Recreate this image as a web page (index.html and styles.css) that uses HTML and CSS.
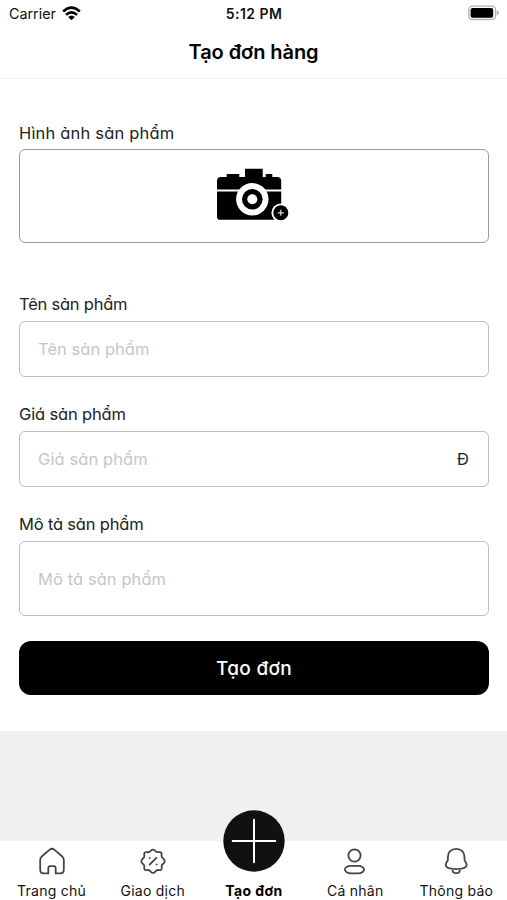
FILE: index.html
```html
<!DOCTYPE html>
<html lang="vi">
<head>
<meta charset="utf-8">
<title>Tạo đơn hàng</title>
<link rel="stylesheet" href="styles.css">
</head>
<body>
<div class="screen">
  <header class="top">
    <div class="status">
      <div class="carrier"><span class="carrier-name">Carrier</span>
        <svg class="wifi" width="19" height="15" viewBox="0 0 19 15"><g fill="none" stroke="#000" stroke-width="2.6"><path d="M1.2 5.5Q9.5-2.3 17.8 5.5"/><path d="M4 8.9Q9.5 3.8 15 8.9"/></g><path d="M6.2 11Q9.5 7.8 12.8 11L9.5 14.3Z"/></svg>
      </div>
      <span class="time">5:12 PM</span>
      <svg class="battery" width="31" height="16" viewBox="0 0 31 16"><rect x=".8" y="1.1" width="26.8" height="13.4" rx="3.8" fill="#fff" stroke="#b4b4b4" stroke-width="1.4"/><rect x="2.6" y="3" width="22.6" height="9.7" rx="2"/><path d="M28.8 5.2Q31 6 31 7.8T28.8 10.4Z" fill="#b4b4b4"/></svg>
    </div>
    <h1 class="title"><span>Tạo đơn hàng</span></h1>
  </header>

  <main class="form">
    <section class="field field-photo">
      <label class="label l-photo">Hình ảnh sản phẩm</label>
      <div class="box photo">
        <svg width="74" height="54" viewBox="216 168 74 54"><path d="M217 189.4V181Q217 177 221 177H226.7V174H239.3V177H245V168.7H262.7V177H265.7V174H272.3V177H277.2Q281.2 177 281.2 181V189.4ZM217 191.5H281.2V216.7Q281.2 219.8 278 219.8H220.2Q217 219.8 217 216.7Z"/><circle cx="252.3" cy="199.3" r="16.2" fill="#fff"/><circle cx="252.3" cy="199.3" r="10.3"/><circle cx="252.3" cy="199.3" r="5" fill="#fff"/><circle cx="280.8" cy="212.8" r="9.4" fill="#fff"/><circle cx="280.8" cy="212.8" r="7.5"/><path d="M277.8 212.8h6M280.8 209.8v6" stroke="#ddd" stroke-width="1.2"/></svg>
      </div>
    </section>
    <section class="field">
      <label class="label l-name">Tên sản phẩm</label>
      <div class="box"><span class="hint h-name">Tên sản phẩm</span></div>
    </section>
    <section class="field">
      <label class="label l-price">Giá sản phẩm</label>
      <div class="box"><span class="hint h-price">Giá sản phẩm</span><span class="unit">Đ</span></div>
    </section>
    <section class="field">
      <label class="label l-desc">Mô tả sản phẩm</label>
      <div class="box tall"><span class="hint h-desc">Mô tả sản phẩm</span></div>
    </section>
    <button class="submit"><span>Tạo đơn</span></button>
  </main>

  <nav class="tabs">
    <a class="tab"><svg width="30" height="30" viewBox="0 0 30 30"><path d="M11.3 27.4H6.8Q3.2 27.4 3.2 23.8V13.8Q3.2 11.6 5 10.2L12.7 3.6Q15 1.8 17.3 3.6L25 10.2Q26.8 11.6 26.8 13.8V23.8Q26.8 27.4 23.2 27.4H18.7V22.3Q18.7 20.1 16.7 20.1H13.3Q11.3 20.1 11.3 22.3Z"/></svg><span class="t-home">Trang chủ</span></a>
    <a class="tab"><svg width="30" height="30" viewBox="0 0 30 30"><path d="M15 3.6C16.8 3.6 17.4 5.6 19.2 6.1S22.4 5.3 23.3 6.7 23 9.3 23.8 10.9 26.7 12.9 26.7 15.2 24.4 17.7 23.8 19.4 24.5 22.5 23.3 23.7 20.9 23.5 19.2 24.2 16.8 26.9 15 26.9 12.5 24.9 10.8 24.2 7.9 24.9 6.7 23.7 6.8 21 6.2 19.4 3.3 17.5 3.3 15.2 5.6 12.5 6.2 10.9 5.5 7.9 6.7 6.7 9.1 6.7 10.8 6.1 13.2 3.6 15 3.6ZM11.6 18.6L18.4 11.8"/><g stroke-width="1"><circle cx="11.6" cy="12" r=".5"/><circle cx="18.4" cy="18.4" r=".5"/></g></svg><span class="t-trade">Giao dịch</span></a>
    <a class="tab active"><svg class="plus" width="64" height="64" viewBox="0 0 64 64"><circle cx="32" cy="32" r="30.7"/><path d="M10.7 32H53.3M32 10.7V53.3"/></svg><span class="t-new">Tạo đơn</span></a>
    <a class="tab"><svg width="30" height="30" viewBox="0 0 30 30"><circle cx="14.5" cy="9.5" r="6.1"/><rect x="4.9" y="19.9" width="19.2" height="7.4" rx="6" ry="3.7"/></svg><span class="t-me">Cá nhân</span></a>
    <a class="tab"><svg width="30" height="30" viewBox="0 0 30 30"><path d="M15.2 2.8C10 2.8 6.9 6.4 6.9 11V13.4C6.9 15.4 4.7 16.3 4.7 19.1C4.7 22 9 23.1 15.2 23.1S25.7 22 25.7 19.1C25.7 16.3 23.5 15.4 23.5 13.4V11C23.5 6.4 20.4 2.8 15.2 2.8ZM11.4 23.2C11.4 28.5 19 28.5 19 23.2"/></svg><span class="t-news">Thông báo</span></a>
  </nav>
</div>
</body>
</html>
```
FILE: styles.css
```css
* { box-sizing: border-box; }
body { margin: 0; background: #f0f0f0; font-family: Inter, "Noto Sans", sans-serif; color: #111; }
.screen { width: 507px; height: 900px; display: flex; flex-direction: column; overflow: hidden; }
.top { height: 79px; background: #fff; border-bottom: 1px solid #f0f0f0; }
.status { height: 27px; padding: 0 8px 0 9px; display: grid; grid-template-columns: 1fr auto 1fr; align-items: center; }
.carrier { display: flex; align-items: center; gap: 6px; font-size: 14.3px; }
.wifi { margin-top: -1px; }
.time { font-size: 14px; font-weight: 600; letter-spacing: .45px; }
.battery { justify-self: end; margin-top: -1px; }
.title { margin: 0; height: 50px; display: flex; align-items: center; justify-content: center; font-size: 20px; font-weight: 600; letter-spacing: -.06px; color: #000; }
.form { height: 652px; padding: 44px 18px 0 19px; background: #fff; }
.field { margin-bottom: 27px; font-feature-settings: "cv11"; }
.field-photo { margin-bottom: 51px; }
.label { display: block; height: 20px; margin-bottom: 7px; line-height: 20px; font-size: 16.5px; white-space: nowrap; color: #222; }
.field-photo .label { margin-bottom: 6px; }
.box { height: 56px; display: flex; align-items: center; justify-content: space-between; padding: 0 18px; border: 1px solid #bdbdbd; border-radius: 6px; font-size: 16.5px; }
.photo { height: 94px; padding: 0 20px 3px 18px; justify-content: center; border-color: #999; }
.tall { height: 75px; }
.hint { color: #c6c6c6; white-space: nowrap; }
.l-photo { letter-spacing: .18px; }
.l-name { letter-spacing: -.22px; }
.l-price { letter-spacing: -.15px; }
.l-desc { letter-spacing: -.18px; }
.h-name { letter-spacing: .04px; }
.h-price { letter-spacing: .1px; }
.h-desc { letter-spacing: .08px; }
.unit { padding-right: 1px; color: #222; }
.submit { display: block; width: 100%; height: 54px; margin-top: -2px; border: 0; border-radius: 12px; background: #000; color: #fff; font: 500 19px Inter, sans-serif; font-feature-settings: "cv11"; letter-spacing: .3px; }
.tabs { margin-top: 110px; height: 59px; padding-left: 1px; background: #fff; display: grid; grid-template-columns: repeat(5, 1fr); }
.tab { height: 59px; display: flex; flex-direction: column; align-items: center; justify-content: flex-end; gap: 6px; font-size: 14px; line-height: 18px; letter-spacing: .25px; white-space: nowrap; }
.tab svg { fill: none; stroke: #444; stroke-width: 1.8; stroke-linejoin: round; stroke-linecap: round; flex: none; }
.tab .plus { fill: #111; stroke: none; margin-bottom: 3px; }
.plus path { stroke: #fff; stroke-width: 2; }
.active { font-weight: 700; color: #000; letter-spacing: .4px; }
```
